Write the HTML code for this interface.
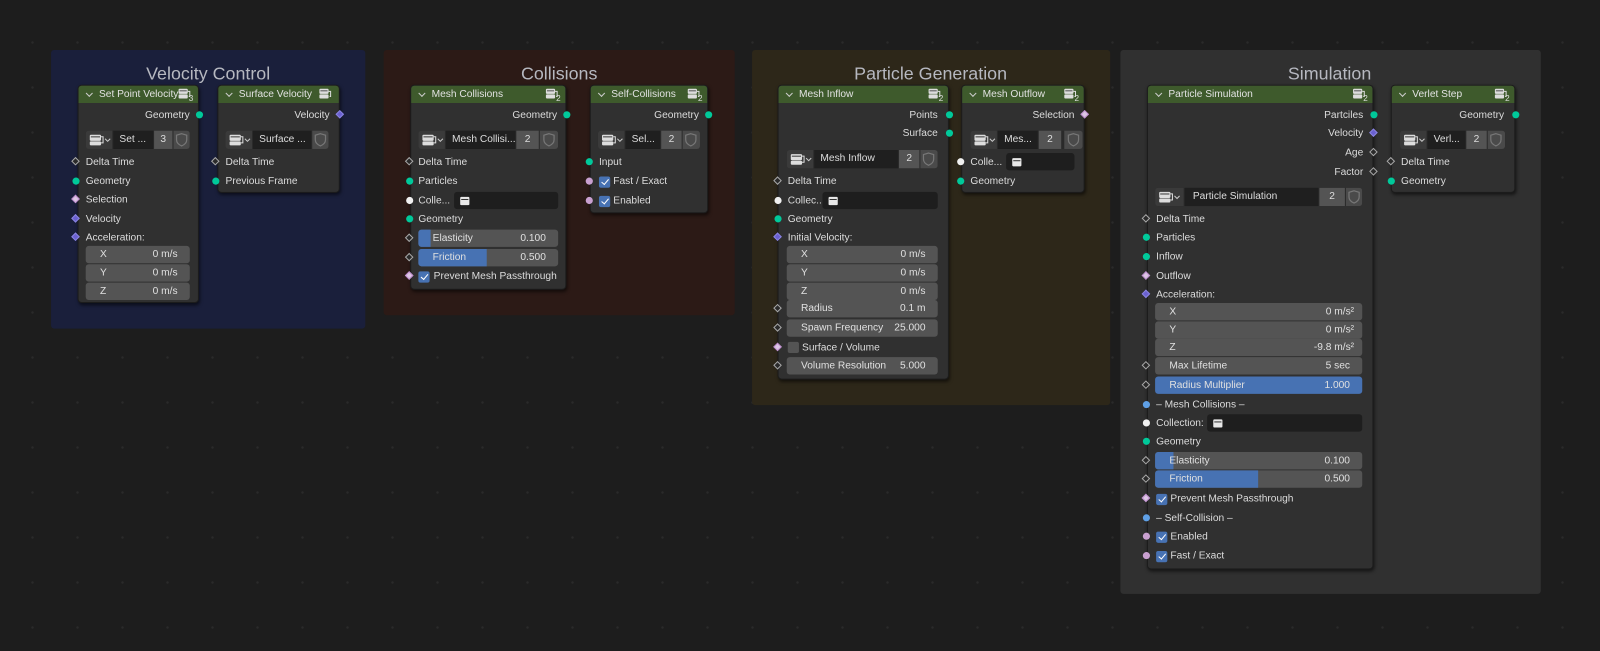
<!DOCTYPE html>
<html><head><meta charset="utf-8"><style>
*{margin:0;padding:0;box-sizing:border-box}
body{width:1600px;height:651px;overflow:hidden;background:#1d1d1d;background-image:radial-gradient(circle,#2a2a2a 1px,transparent 1.5px);background-size:45px 45px;background-position:10px 20px;font-family:"Liberation Sans",sans-serif;position:relative}
#root{position:absolute;left:0;top:0;width:1568px;height:638px;transform:scale(1.0204);transform-origin:0 0}
.f{position:absolute;border-radius:3px}
.ft{position:absolute;font-size:17.5px;color:#b6b8c0;transform:translateX(-50%);white-space:nowrap;line-height:20px}
.n{position:absolute;background:#303030;border-radius:4px;box-shadow:1px 2px 3px rgba(0,0,0,.55);border:1px solid #1c1c1c}
.h{position:absolute;left:0;right:0;top:0;height:17px;background:#3e5a2c;border-radius:3px 3px 0 0;color:#e2e2e2;font-size:10px;line-height:17px;padding-left:20px;white-space:nowrap}
.h:before{content:"";position:absolute;left:8px;top:5px;width:4px;height:4px;border-right:1px solid #ccc;border-bottom:1px solid #ccc;transform:rotate(45deg)}
.hi{position:absolute;right:4px;top:2px;width:16px;height:13px}
.t{position:absolute;font-size:10px;color:#dcdcdc;line-height:12px;white-space:nowrap;transform:translateY(1.5px)}
.s{position:absolute;width:7px;height:7px;border-radius:50%}
.d{position:absolute;width:6px;height:6px;transform:rotate(45deg)}
.g{background:#00c99a}.w{background:#f0f0f0}.bl{background:#5fa0e6}.pk{background:#c9a0d0}
.fl{background:#2a2a2a;border:1.5px solid #a8a8a8}
.vc{background:#6a60d0;border:1px solid #8a84e0}
.bo{background:#dcc6e4;border:1.5px solid #c08fd0}
.b{position:absolute;background:#545454;border-radius:3px;height:17px}
.bf{position:absolute;left:0;top:0;bottom:0;background:#4772b3;border-radius:3px 0 0 3px}
.bt{position:absolute;font-size:10px;color:#e0e0e0;line-height:17px;white-space:nowrap}
.dk{position:absolute;background:#1e1e1e;border-radius:3px;height:17px}
.cb{position:absolute;width:11px;height:11px;background:#4772b3;border-radius:2px;margin-top:1px}
.cb:after{content:"";position:absolute;left:3.5px;top:1px;width:3px;height:6px;border-right:1.5px solid #fff;border-bottom:1.5px solid #fff;transform:rotate(40deg)}
.cg{position:absolute;width:11px;height:11px;background:#545454;border-radius:2px;margin-top:1px}
.wd{position:absolute;height:18px;border-radius:3px;overflow:hidden;background:#2a2a2a}
.wd .ic{position:absolute;left:0;top:0;bottom:0;background:#3a3a3a}
.wd .nm{position:absolute;top:0;bottom:0;background:#1f1f1f;color:#ddd;font-size:10px;line-height:18px;padding-left:6px;white-space:nowrap;overflow:hidden}
.wd .nu{position:absolute;top:0;bottom:0;background:#545454;color:#ddd;font-size:10px;line-height:18px;text-align:center}
.wd .sh{position:absolute;top:0;bottom:0;right:0;background:#4a4a4a}
.ar{position:absolute;width:9px;height:8px;background:#e8e8e8;border-radius:1px}
.ar:after{content:"";position:absolute;left:1px;right:1px;top:2px;height:1px;background:#333}
</style></head><body>
<svg width="0" height="0" style="position:absolute"><defs>
<g id="ni"><rect x="1" y="1" width="9" height="5" rx="1" fill="#ddd"/><rect x="1" y="6.5" width="9" height="4" rx="1" fill="#ddd"/><rect x="2" y="2.5" width="7" height="1" fill="#555"/><path d="M10 3.5h2v5h-1" stroke="#ddd" fill="none"/></g>
<g id="shd"><path d="M8 2 L13 3.5 L13 8 Q13 12 8 14 Q3 12 3 8 L3 3.5 Z" fill="none" stroke="#777" stroke-width="1.2"/></g>
<g id="wic"><rect x="4" y="4" width="11" height="6" rx="1" fill="#ddd"/><rect x="4" y="10.5" width="11" height="4" rx="1" fill="#ddd"/><rect x="5" y="5.5" width="9" height="1.2" fill="#555"/><path d="M15 6h2v6h-2" stroke="#ddd" fill="none"/><path d="M19 8l2.5 2.5L24 8" stroke="#ccc" fill="none"/></g>
</defs></svg>
<div id="root">
<!-- FRAMES -->
<div class="f" style="left:50px;top:49px;width:308px;height:273px;background:#1a1f3b"></div>
<div class="ft" style="left:204px;top:62px">Velocity Control</div>
<div class="f" style="left:376px;top:49px;width:344px;height:260px;background:#2c1a16"></div>
<div class="ft" style="left:548px;top:62px">Collisions</div>
<div class="f" style="left:737px;top:49px;width:351px;height:348px;background:#2d2719"></div>
<div class="ft" style="left:912px;top:62px">Particle Generation</div>
<div class="f" style="left:1098px;top:49px;width:412px;height:533px;background:#303030"></div>
<div class="ft" style="left:1303px;top:62px">Simulation</div>

<!-- ===== Set Point Velocity ===== -->
<div class="n" style="left:76px;top:83px;width:119px;height:214px">
<div class="h">Set Point Velocity<svg class="hi" viewBox="0 0 16 13"><use href="#ni"/><text x="11" y="13" font-size="8" fill="#ddd" font-family="Liberation Sans">3</text></svg></div></div>
<div class="t" style="right:1382px;top:106px">Geometry</div><div class="s g" style="left:192px;top:109px"></div>
<div class="wd" style="left:84px;top:128px;width:102px"><div class="ic" style="width:26px"><svg width="26" height="18"><use href="#wic"/></svg></div><div class="nm" style="left:27px;width:39px">Set ...</div><div class="nu" style="left:67px;width:18px">3</div><div class="sh" style="width:16px"><svg width="16" height="18"><use href="#shd" y="1"/></svg></div></div>
<div class="d fl" style="left:71px;top:155px"></div><div class="t" style="left:84px;top:152px">Delta Time</div>
<div class="s g" style="left:71px;top:174px"></div><div class="t" style="left:84px;top:171px">Geometry</div>
<div class="d bo" style="left:71px;top:192px"></div><div class="t" style="left:84px;top:189px">Selection</div>
<div class="d vc" style="left:71px;top:211px"></div><div class="t" style="left:84px;top:208px">Velocity</div>
<div class="d vc" style="left:71px;top:229px"></div><div class="t" style="left:84px;top:226px">Acceleration:</div>
<div class="b" style="left:84px;top:241px;width:102px"><span class="bt" style="left:14px">X</span><span class="bt" style="right:12px">0 m/s</span></div>
<div class="b" style="left:84px;top:259px;width:102px"><span class="bt" style="left:14px">Y</span><span class="bt" style="right:12px">0 m/s</span></div>
<div class="b" style="left:84px;top:277px;width:102px"><span class="bt" style="left:14px">Z</span><span class="bt" style="right:12px">0 m/s</span></div>

<!-- ===== Surface Velocity ===== -->
<div class="n" style="left:213px;top:83px;width:120px;height:106px">
<div class="h">Surface Velocity<svg class="hi" viewBox="0 0 16 13"><use href="#ni"/></svg></div></div>
<div class="t" style="right:1245px;top:106px">Velocity</div><div class="d vc" style="left:330px;top:109px"></div>
<div class="wd" style="left:221px;top:128px;width:101px"><div class="ic" style="width:26px"><svg width="26" height="18"><use href="#wic"/></svg></div><div class="nm" style="left:27px;width:57px">Surface ...</div><div class="sh" style="width:16px"><svg width="16" height="18"><use href="#shd" y="1"/></svg></div></div>
<div class="d fl" style="left:208px;top:155px"></div><div class="t" style="left:221px;top:152px">Delta Time</div>
<div class="s g" style="left:208px;top:174px"></div><div class="t" style="left:221px;top:171px">Previous Frame</div>

<!-- ===== Mesh Collisions ===== -->
<div class="n" style="left:402px;top:83px;width:153px;height:201px">
<div class="h">Mesh Collisions<svg class="hi" viewBox="0 0 16 13"><use href="#ni"/><text x="11" y="13" font-size="8" fill="#ddd" font-family="Liberation Sans">2</text></svg></div></div>
<div class="t" style="right:1022px;top:106px">Geometry</div><div class="s g" style="left:552px;top:109px"></div>
<div class="wd" style="left:410px;top:128px;width:137px"><div class="ic" style="width:26px"><svg width="26" height="18"><use href="#wic"/></svg></div><div class="nm" style="left:27px;width:68px">Mesh Collisi...</div><div class="nu" style="left:96px;width:22px">2</div><div class="sh" style="width:18px"><svg width="18" height="18"><use href="#shd" x="1" y="1"/></svg></div></div>
<div class="d fl" style="left:398px;top:155px"></div><div class="t" style="left:410px;top:152px">Delta Time</div>
<div class="s g" style="left:398px;top:174px"></div><div class="t" style="left:410px;top:171px">Particles</div>
<div class="s w" style="left:398px;top:193px"></div><div class="t" style="left:410px;top:190px">Colle...</div>
<div class="dk" style="left:445px;top:188px;width:102px"><div class="ar" style="left:6px;top:5px"></div></div>
<div class="s g" style="left:398px;top:211px"></div><div class="t" style="left:410px;top:208px">Geometry</div>
<div class="d fl" style="left:398px;top:230px"></div><div class="b" style="left:410px;top:225px;width:137px"><div class="bf" style="width:12px"></div><span class="bt" style="left:14px">Elasticity</span><span class="bt" style="right:12px">0.100</span></div>
<div class="d fl" style="left:398px;top:249px"></div><div class="b" style="left:410px;top:244px;width:137px"><div class="bf" style="width:67px"></div><span class="bt" style="left:14px">Friction</span><span class="bt" style="right:12px">0.500</span></div>
<div class="d bo" style="left:398px;top:267px"></div><div class="cb" style="left:410px;top:265px"></div><div class="t" style="left:425px;top:264px">Prevent Mesh Passthrough</div>

<!-- ===== Self-Collisions ===== -->
<div class="n" style="left:578px;top:83px;width:116px;height:126px">
<div class="h">Self-Collisions<svg class="hi" viewBox="0 0 16 13"><use href="#ni"/><text x="11" y="13" font-size="8" fill="#ddd" font-family="Liberation Sans">2</text></svg></div></div>
<div class="t" style="right:883px;top:106px">Geometry</div><div class="s g" style="left:691px;top:109px"></div>
<div class="wd" style="left:586px;top:128px;width:100px"><div class="ic" style="width:26px"><svg width="26" height="18"><use href="#wic"/></svg></div><div class="nm" style="left:27px;width:34px">Sel...</div><div class="nu" style="left:62px;width:20px">2</div><div class="sh" style="width:17px"><svg width="17" height="18"><use href="#shd" y="1"/></svg></div></div>
<div class="s g" style="left:574px;top:155px"></div><div class="t" style="left:587px;top:152px">Input</div>
<div class="s pk" style="left:574px;top:174px"></div><div class="cb" style="left:587px;top:172px"></div><div class="t" style="left:601px;top:171px">Fast / Exact</div>
<div class="s pk" style="left:574px;top:193px"></div><div class="cb" style="left:587px;top:191px"></div><div class="t" style="left:601px;top:190px">Enabled</div>

<!-- ===== Mesh Inflow ===== -->
<div class="n" style="left:762px;top:83px;width:168px;height:289px">
<div class="h">Mesh Inflow<svg class="hi" viewBox="0 0 16 13"><use href="#ni"/><text x="11" y="13" font-size="8" fill="#ddd" font-family="Liberation Sans">2</text></svg></div></div>
<div class="t" style="right:649px;top:106px">Points</div><div class="s g" style="left:927px;top:109px"></div>
<div class="t" style="right:649px;top:124px">Surface</div><div class="s g" style="left:927px;top:127px"></div>
<div class="wd" style="left:771px;top:147px;width:148px"><div class="ic" style="width:26px"><svg width="26" height="18"><use href="#wic"/></svg></div><div class="nm" style="left:27px;width:82px">Mesh Inflow</div><div class="nu" style="left:110px;width:20px">2</div><div class="sh" style="width:17px"><svg width="17" height="18"><use href="#shd" y="1"/></svg></div></div>
<div class="d fl" style="left:759px;top:174px"></div><div class="t" style="left:772px;top:171px">Delta Time</div>
<div class="s w" style="left:759px;top:193px"></div><div class="t" style="left:772px;top:190px">Collec...</div>
<div class="dk" style="left:806px;top:188px;width:113px"><div class="ar" style="left:6px;top:5px"></div></div>
<div class="s g" style="left:759px;top:211px"></div><div class="t" style="left:772px;top:208px">Geometry</div>
<div class="d vc" style="left:759px;top:229px"></div><div class="t" style="left:772px;top:226px">Initial Velocity:</div>
<div class="b" style="left:771px;top:241px;width:148px"><span class="bt" style="left:14px">X</span><span class="bt" style="right:12px">0 m/s</span></div>
<div class="b" style="left:771px;top:259px;width:148px"><span class="bt" style="left:14px">Y</span><span class="bt" style="right:12px">0 m/s</span></div>
<div class="b" style="left:771px;top:277px;width:148px"><span class="bt" style="left:14px">Z</span><span class="bt" style="right:12px">0 m/s</span></div>
<div class="d fl" style="left:759px;top:299px"></div><div class="b" style="left:771px;top:294px;width:148px"><span class="bt" style="left:14px">Radius</span><span class="bt" style="right:12px">0.1 m</span></div>
<div class="d fl" style="left:759px;top:318px"></div><div class="b" style="left:771px;top:313px;width:148px"><span class="bt" style="left:14px">Spawn Frequency</span><span class="bt" style="right:12px">25.000</span></div>
<div class="d bo" style="left:759px;top:337px"></div><div class="cg" style="left:772px;top:334px"></div><div class="t" style="left:786px;top:334px">Surface / Volume</div>
<div class="d fl" style="left:759px;top:355px"></div><div class="b" style="left:771px;top:350px;width:148px"><span class="bt" style="left:14px">Volume Resolution</span><span class="bt" style="right:12px">5.000</span></div>

<!-- ===== Mesh Outflow ===== -->
<div class="n" style="left:942px;top:83px;width:121px;height:106px">
<div class="h">Mesh Outflow<svg class="hi" viewBox="0 0 16 13"><use href="#ni"/><text x="11" y="13" font-size="8" fill="#ddd" font-family="Liberation Sans">2</text></svg></div></div>
<div class="t" style="right:515px;top:106px">Selection</div><div class="d bo" style="left:1060px;top:109px"></div>
<div class="wd" style="left:951px;top:128px;width:110px"><div class="ic" style="width:26px"><svg width="26" height="18"><use href="#wic"/></svg></div><div class="nm" style="left:27px;width:39px">Mes...</div><div class="nu" style="left:67px;width:22px">2</div><div class="sh" style="width:18px"><svg width="18" height="18"><use href="#shd" x="1" y="1"/></svg></div></div>
<div class="s w" style="left:938px;top:155px"></div><div class="t" style="left:951px;top:152px">Colle...</div>
<div class="dk" style="left:986px;top:150px;width:67px"><div class="ar" style="left:6px;top:5px"></div></div>
<div class="s g" style="left:938px;top:174px"></div><div class="t" style="left:951px;top:171px">Geometry</div>

<!-- ===== Particle Simulation ===== -->
<div class="n" style="left:1124px;top:83px;width:222px;height:475px">
<div class="h">Particle Simulation<svg class="hi" viewBox="0 0 16 13"><use href="#ni"/><text x="11" y="13" font-size="8" fill="#ddd" font-family="Liberation Sans">2</text></svg></div></div>
<div class="t" style="right:232px;top:106px">Partciles</div><div class="s g" style="left:1343px;top:109px"></div>
<div class="t" style="right:232px;top:124px">Velocity</div><div class="d vc" style="left:1343px;top:127px"></div>
<div class="t" style="right:232px;top:143px">Age</div><div class="d fl" style="left:1343px;top:146px"></div>
<div class="t" style="right:232px;top:162px">Factor</div><div class="d fl" style="left:1343px;top:165px"></div>
<div class="wd" style="left:1132px;top:184px;width:203px"><div class="ic" style="width:28px"><svg width="28" height="18"><use href="#wic"/></svg></div><div class="nm" style="left:29px;width:131px;padding-left:8px">Particle Simulation</div><div class="nu" style="left:161px;width:25px">2</div><div class="sh" style="width:16px"><svg width="16" height="18"><use href="#shd" y="1"/></svg></div></div>
<div class="d fl" style="left:1120px;top:211px"></div><div class="t" style="left:1133px;top:208px">Delta Time</div>
<div class="s g" style="left:1120px;top:229px"></div><div class="t" style="left:1133px;top:226px">Particles</div>
<div class="s g" style="left:1120px;top:248px"></div><div class="t" style="left:1133px;top:245px">Inflow</div>
<div class="d bo" style="left:1120px;top:267px"></div><div class="t" style="left:1133px;top:264px">Outflow</div>
<div class="d vc" style="left:1120px;top:285px"></div><div class="t" style="left:1133px;top:282px">Acceleration:</div>
<div class="b" style="left:1132px;top:297px;width:203px"><span class="bt" style="left:14px">X</span><span class="bt" style="right:8px">0 m/s²</span></div>
<div class="b" style="left:1132px;top:315px;width:203px"><span class="bt" style="left:14px">Y</span><span class="bt" style="right:8px">0 m/s²</span></div>
<div class="b" style="left:1132px;top:332px;width:203px"><span class="bt" style="left:14px">Z</span><span class="bt" style="right:8px">-9.8 m/s²</span></div>
<div class="d fl" style="left:1120px;top:355px"></div><div class="b" style="left:1132px;top:350px;width:203px"><span class="bt" style="left:14px">Max Lifetime</span><span class="bt" style="right:12px">5 sec</span></div>
<div class="d fl" style="left:1120px;top:374px"></div><div class="b" style="left:1132px;top:369px;width:203px;background:#4772b3"><span class="bt" style="left:14px">Radius Multiplier</span><span class="bt" style="right:12px">1.000</span></div>
<div class="s bl" style="left:1120px;top:393px"></div><div class="t" style="left:1133px;top:390px">– Mesh Collisions –</div>
<div class="s w" style="left:1120px;top:411px"></div><div class="t" style="left:1133px;top:408px">Collection:</div>
<div class="dk" style="left:1183px;top:406px;width:152px"><div class="ar" style="left:6px;top:5px"></div></div>
<div class="s g" style="left:1120px;top:429px"></div><div class="t" style="left:1133px;top:426px">Geometry</div>
<div class="d fl" style="left:1120px;top:448px"></div><div class="b" style="left:1132px;top:443px;width:203px"><div class="bf" style="width:18px"></div><span class="bt" style="left:14px">Elasticity</span><span class="bt" style="right:12px">0.100</span></div>
<div class="d fl" style="left:1120px;top:466px"></div><div class="b" style="left:1132px;top:461px;width:203px"><div class="bf" style="width:101px"></div><span class="bt" style="left:14px">Friction</span><span class="bt" style="right:12px">0.500</span></div>
<div class="d bo" style="left:1120px;top:485px"></div><div class="cb" style="left:1133px;top:483px"></div><div class="t" style="left:1147px;top:482px">Prevent Mesh Passthrough</div>
<div class="s bl" style="left:1120px;top:504px"></div><div class="t" style="left:1133px;top:501px">– Self-Collision –</div>
<div class="s pk" style="left:1120px;top:522px"></div><div class="cb" style="left:1133px;top:520px"></div><div class="t" style="left:1147px;top:519px">Enabled</div>
<div class="s pk" style="left:1120px;top:541px"></div><div class="cb" style="left:1133px;top:539px"></div><div class="t" style="left:1147px;top:538px">Fast / Exact</div>

<!-- ===== Verlet Step ===== -->
<div class="n" style="left:1363px;top:83px;width:122px;height:106px">
<div class="h">Verlet Step<svg class="hi" viewBox="0 0 16 13"><use href="#ni"/><text x="11" y="13" font-size="8" fill="#ddd" font-family="Liberation Sans">2</text></svg></div></div>
<div class="t" style="right:94px;top:106px">Geometry</div><div class="s g" style="left:1482px;top:109px"></div>
<div class="wd" style="left:1372px;top:128px;width:103px"><div class="ic" style="width:26px"><svg width="26" height="18"><use href="#wic"/></svg></div><div class="nm" style="left:27px;width:37px">Verl...</div><div class="nu" style="left:65px;width:20px">2</div><div class="sh" style="width:17px"><svg width="17" height="18"><use href="#shd" y="1"/></svg></div></div>
<div class="d fl" style="left:1360px;top:155px"></div><div class="t" style="left:1373px;top:152px">Delta Time</div>
<div class="s g" style="left:1360px;top:174px"></div><div class="t" style="left:1373px;top:171px">Geometry</div>
</div>
</body></html>
